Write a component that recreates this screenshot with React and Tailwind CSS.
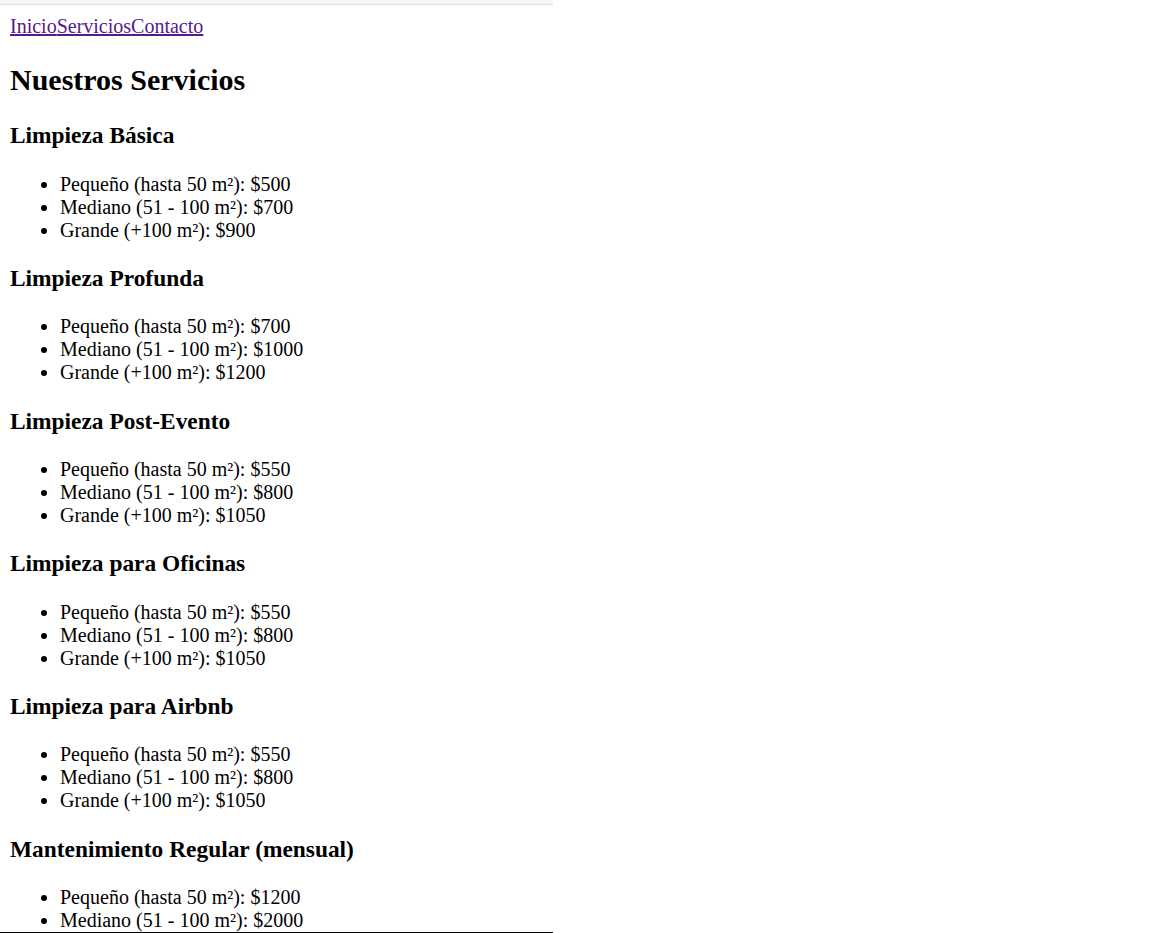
const SERVICES = [
  { name: "Limpieza Básica", prices: ["$500", "$700", "$900"] },
  { name: "Limpieza Profunda", prices: ["$700", "$1000", "$1200"] },
  { name: "Limpieza Post-Evento", prices: ["$550", "$800", "$1050"] },
  { name: "Limpieza para Oficinas", prices: ["$550", "$800", "$1050"] },
  { name: "Limpieza para Airbnb", prices: ["$550", "$800", "$1050"] },
  { name: "Mantenimiento Regular (mensual)", prices: ["$1200", "$2000", "$2800"] },
];

const SIZES = ["Pequeño (hasta 50 m²)", "Mediano (51 - 100 m²)", "Grande (+100 m²)"];

export default function App() {
  return (
    <div className="relative h-[933px] overflow-hidden bg-white text-black font-['Liberation_Serif','Times_New_Roman',serif] text-[20px] leading-[23px]">
      {/* top strip */}
      <div className="h-[5px] w-[553px] bg-[#f3f8f6] border-b border-[#d9e6e2]" />

      <div className="m-[10px]">
        <nav>
          <a href="#" className="text-[#551a8b] underline">Inicio</a>
          <a href="#" className="text-[#551a8b] underline">Servicios</a>
          <a href="#" className="text-[#551a8b] underline">Contacto</a>
        </nav>

        <h2 className="my-[24.9px] text-[30px] leading-[34.5px] font-bold">Nuestros Servicios</h2>

        {SERVICES.map((s) => (
          <section key={s.name}>
            <h3 className="my-[23.4px] text-[23.4px] leading-[26.9px] font-bold">{s.name}</h3>
            <ul className="my-[20px] pl-[50px] list-disc">
              {SIZES.map((size, i) => (
                <li key={size}>{size}: {s.prices[i]}</li>
              ))}
            </ul>
          </section>
        ))}
      </div>

      {/* bottom edge */}
      <div className="absolute left-0 top-[932px] h-px w-[553px] bg-black" />
    </div>
  );
}
